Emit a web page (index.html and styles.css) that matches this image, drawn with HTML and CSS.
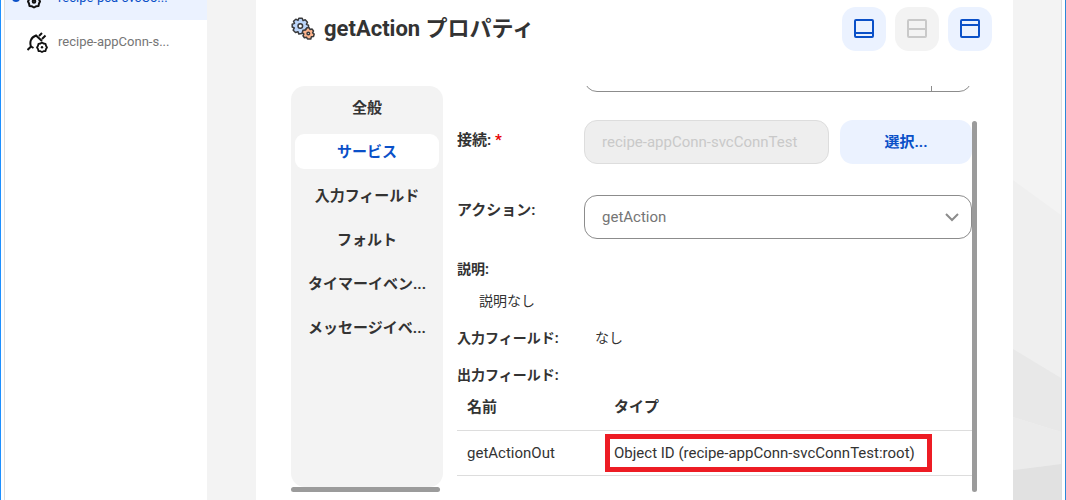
FILE: index.html
```html
<!DOCTYPE html>
<html lang="ja">

<head>
    <meta charset="UTF-8">
    <meta name="viewport" content="width=device-width, initial-scale=1.0">
    <title>getAction プロパティ</title>
    <link rel="stylesheet" href="styles.css">
</head>

<body>
    <div class="window">
        <!-- Resource list -->
        <nav class="sidebar">
            <a class="resource active" href="#">
                <span class="dot"></span>
                <svg class="resource-icon" viewBox="0 0 24 24" fill="none" stroke="#111" stroke-width="2" stroke-linejoin="round">
                    <path d="M5 11 L7 9.500 L9 11 L11.500 11 L12 13.500 L13 15.500 L12 17.500 L11.500 20 L9 20.300 L7 21.500 L5 20.300 L2.500 20 L2 17.500 L1 15.500 L2 13.500 L2.500 11 Z" />
                    <circle cx="7" cy="15.500" r="1.300" />
                </svg>
                <span class="resource-name">recipe-pca-svcCo...</span>
            </a>
            <a class="resource" href="#">
                <span class="dot"></span>
                <svg class="resource-icon" viewBox="0 0 24 24" fill="none" stroke="#111" stroke-width="2">
                    <path d="M0.500 20 L4 16.500 L6.500 18 M4 16.500 C2.500 12.500 3.500 7.500 9 5.500 L15 11 M12 6 L15 3 M15 9 L18.500 5.500" />
                    <path d="M13.500 13.500 L15 12.500 L16.500 13.500 L18.500 13.800 L19 15.800 L20 17.500 L19 19 L18.500 21 L16.500 21.200 L15 22 L13.500 21.200 L11.500 21 L11 19 L10 17.500 L11 15.800 L11.500 13.800 Z" stroke-width="1.800" stroke-linejoin="round" />
                    <circle cx="15" cy="17.300" r="1.200" fill="#111" stroke="none" />
                </svg>
                <span class="resource-name">recipe-appConn-s...</span>
            </a>
        </nav>

        <main class="workspace">
            <section class="panel">
                <header class="panel-header">
                    <svg class="gears" viewBox="0 0 24 24" stroke="#3a3a3c" stroke-width="1.500" stroke-linejoin="round">
                        <path fill="#bcd6fb" d="M7.800 1.200 H11.200 L12 3.600 L14.200 2.700 L16.500 5.200 L15.400 7.400 L17.500 8.300 V11 L15 12 L11 16.500 L7.800 17 L7 14.700 L4.500 15.500 L2.200 13.200 L3.300 11 L1.200 10 V7.200 L3.500 6.400 L2.500 4.200 L4.800 2.200 L7 3.400 Z" />
                        <circle cx="9.300" cy="9" r="2.300" fill="#fff" />
                        <path fill="#fbb38c" d="M15.800 10.800 H18.200 L19 12.500 L21 12 L22.500 14 L21.600 15.800 L23.200 17 L22.500 19.500 L20.400 19.800 L19.800 22 H16.500 L15.600 20.300 L13.400 20.800 L12 18.800 L12.900 17 L11.200 15.700 L12 13.300 L14.700 13 Z" />
                        <circle cx="17.300" cy="16.500" r="1.300" fill="#fff" />
                    </svg>
                    <h1>getAction プロパティ</h1>
                    <div class="layout-buttons">
                        <button type="button" aria-label="下部に最小化">
                            <svg viewBox="0 0 20 20"><rect x="1" y="1" width="18" height="17" rx="1" /><path d="M1 14 H19" /></svg>
                        </button>
                        <button type="button" aria-label="分割表示" disabled>
                            <svg viewBox="0 0 20 20"><rect x="1" y="1" width="18" height="17" rx="1" /><path d="M1 10 H19" /></svg>
                        </button>
                        <button type="button" aria-label="最大化">
                            <svg viewBox="0 0 20 20"><rect x="1" y="1" width="18" height="17" rx="1" /><path d="M1 6 H19" /></svg>
                        </button>
                    </div>
                </header>

                <div class="panel-body">
                    <!-- Tabs -->
                    <div class="tabs-column">
                        <div class="tabs" role="tablist">
                            <button type="button" role="tab">全般</button>
                            <button type="button" role="tab" class="selected" aria-selected="true">サービス</button>
                            <button type="button" role="tab">入力フィールド</button>
                            <button type="button" role="tab">フォルト</button>
                            <button type="button" role="tab">タイマーイベン...</button>
                            <button type="button" role="tab">メッセージイベ...</button>
                        </div>
                        <div class="scroll-x"></div>
                    </div>

                    <!-- Service settings -->
                    <div class="form-pane">
                        <form class="service-form">
                            <div class="field field-first">
                                <div class="control">
                                    <select aria-label="サービス"></select>
                                    <span class="divider"></span>
                                </div>
                            </div>
                            <div class="field">
                                <label for="connection">接続: <span class="required">*</span></label>
                                <div class="control">
                                    <input type="text" id="connection" value="recipe-appConn-svcConnTest" disabled>
                                    <button type="button" class="choose">選択...</button>
                                </div>
                            </div>
                            <div class="field field-action">
                                <label for="action">アクション:</label>
                                <div class="control">
                                    <select id="action">
                                        <option>getAction</option>
                                    </select>
                                    <svg class="chevron" viewBox="0 0 16 16"><path d="M2 5 L8 11 L14 5" /></svg>
                                </div>
                            </div>
                        </form>

                        <dl class="details">
                            <div class="stacked">
                                <dt>説明:</dt>
                                <dd>説明なし</dd>
                            </div>
                            <div class="inline">
                                <dt>入力フィールド:</dt>
                                <dd>なし</dd>
                            </div>
                        </dl>

                        <table class="outputs">
                            <caption>出力フィールド:</caption>
                            <thead>
                                <tr>
                                    <th class="name">名前</th>
                                    <th>タイプ</th>
                                </tr>
                            </thead>
                            <tbody>
                                <tr>
                                    <td>getActionOut</td>
                                    <td><span class="marked">Object ID (recipe-appConn-svcConnTest:root)</span></td>
                                </tr>
                            </tbody>
                        </table>
                    </div>
                    <div class="scroll-y"></div>
                </div>
            </section>

            <!-- Backdrop facets -->
            <svg class="backdrop" viewBox="0 0 48 500" preserveAspectRatio="none">
                <path fill="#efefef" d="M0 180 L48 215 V500 H0 Z" />
                <path fill="#e8e8e8" d="M0 349 L48 378 V432 L0 417 Z" />
                <path fill="#ebebeb" d="M0 417 L48 432 V464 L0 470 Z" />
                <path fill="#e1e1e1" d="M0 470 L48 464 V500 H0 Z" />
            </svg>
        </main>
    </div>
</body>

</html>
```

FILE: styles.css
```css
* {
    margin: 0;
    padding: 0;
    box-sizing: border-box;
}

body {
    font-family: Roboto, "Noto Sans CJK JP", sans-serif;
    font-size: 15px;
    line-height: 20px;
    color: #333;
    background-color: #fff;
}

button,
input,
select {
    font: inherit;
}

.window {
    display: flex;
    height: 100vh;
    padding: 0 3px;
    border-left: 1px solid #1e90ff;
    border-right: 1px solid #2b88d8;
    overflow: hidden;
}

/* Resource list */
.sidebar {
    width: 203px;
    flex-shrink: 0;
    margin-top: -24px; /* scrolled by half a row */
    border-left: 1px solid #ddd;
}

.resource {
    display: flex;
    align-items: center;
    height: 44px;
    padding-left: 7px;
    font-size: 13px;
    color: #757575;
    text-decoration: none;
}

.resource.active {
    background-color: #ebf2ff;
    color: #0a50c8;
}

.dot {
    width: 8px;
    height: 8px;
    margin-right: 7px;
    border-radius: 50%;
}

.active .dot {
    background-color: #0a50c8;
}

.resource-icon {
    width: 24px;
    height: 24px;
    margin-right: 7px;
}

/* Workspace */
.workspace {
    display: flex;
    flex: 1;
    min-width: 0;
    padding-left: 49px;
    background-color: #f3f3f3;
    border-right: 1px solid #ddd;
}

.backdrop {
    width: 48px;
    height: 100%;
    flex-shrink: 0;
}

.panel {
    display: flex;
    flex: 1;
    flex-direction: column;
    min-width: 0;
    padding: 7px 21px 8px 35px;
    background-color: #fff;
}

.panel-header {
    display: flex;
    align-items: center;
    height: 44px;
    margin-bottom: 35px;
}

.gears {
    width: 24px;
    height: 24px;
    margin-right: 9px;
}

h1 {
    font-size: 22px;
    line-height: 28px;
    font-weight: 700;
}

.layout-buttons {
    display: flex;
    gap: 9px;
    margin-left: auto;
}

.layout-buttons button {
    display: flex;
    align-items: center;
    justify-content: center;
    width: 44px;
    height: 44px;
    border: none;
    border-radius: 14px;
    background-color: #ebf2ff;
    color: #0a50c8;
}

.layout-buttons button:disabled {
    background-color: #f3f3f3;
    color: #c9c9c9;
}

.layout-buttons svg {
    width: 20px;
    height: 20px;
    fill: none;
    stroke: currentColor;
    stroke-width: 2;
}

.panel-body {
    display: flex;
    flex: 1;
    min-height: 0;
    margin-right: 15px;
}

/* Tabs */
.tabs-column {
    display: flex;
    flex-direction: column;
    width: 152px;
    flex-shrink: 0;
    margin-right: 14px;
}

.tabs {
    display: flex;
    flex: 1;
    flex-direction: column;
    gap: 9px;
    padding: 4px;
    border-radius: 14px;
    background-color: #f3f3f3;
}

.tabs button {
    height: 35px;
    padding: 0 8px;
    border: none;
    border-radius: 9px;
    background: none;
    color: #333;
    font-weight: 700;
    white-space: nowrap;
}

.tabs .selected {
    background-color: #fff;
    color: #0a50c8;
}

.scroll-x {
    height: 5px;
    margin-right: 3px;
    border-radius: 3px;
    background-color: #9b9b9b;
}

/* Service settings */
.form-pane {
    flex: 1;
    min-width: 0;
    overflow: hidden;
}

.scroll-y {
    width: 5px;
    margin-top: 35px;
    border-radius: 3px;
    background-color: #9b9b9b;
}

.service-form {
    margin-top: -38px; /* scrolled past the first field */
}

.field {
    display: flex;
    margin-bottom: 28px;
}

.field label {
    width: 127px;
    padding-top: 10px;
    font-weight: 700;
}

.field-first {
    padding-left: 127px;
}

.required {
    color: #e60000;
}

.control {
    display: flex;
    flex: 1;
    gap: 11px;
    min-width: 0;
    position: relative;
}

.control input,
.control select {
    flex: 1;
    min-width: 0;
    height: 44px;
    padding: 0 17px;
    border: 1px solid #8c8c8c;
    border-radius: 13px;
    background-color: #fff;
    color: #757575;
    appearance: none;
}

.control input:disabled {
    border-color: #ddd;
    background-color: #eee;
    color: #c9c9c9;
}

.divider {
    position: absolute;
    top: 0;
    right: 40px;
    width: 1px;
    height: 44px;
    background-color: #8c8c8c;
}

.choose {
    width: 132px;
    height: 44px;
    border: none;
    border-radius: 13px;
    background-color: #ebf2ff;
    color: #0a50c8;
    font-weight: 700;
}

.field-action {
    margin-bottom: 20px;
}

.field-action label {
    padding-top: 8px;
}

.field-action .control {
    padding-top: 3px;
}

.chevron {
    position: absolute;
    top: 17px;
    right: 12px;
    width: 16px;
    height: 16px;
    fill: none;
    stroke: #8c8c8c;
    stroke-width: 2;
    pointer-events: none;
}

.details,
.outputs caption {
    font-size: 14px;
}

.details dt {
    font-weight: 700;
}

.stacked dd {
    margin: 12px 0 0 22px;
}

.inline {
    display: flex;
    margin-top: 17px;
}

.inline dt {
    width: 138px;
}

/* Output fields */
.outputs {
    width: 100%;
    margin-top: 17px;
    border-collapse: collapse;
    table-layout: fixed;
    text-align: left;
}

.outputs caption {
    font-weight: 700;
    text-align: left;
}

.outputs th,
.outputs td {
    height: 45px;
    padding: 0 10px;
    border-bottom: 1px solid #ddd;
    white-space: nowrap;
}

.outputs .name {
    width: 147px;
}

.marked {
    position: relative;
}

.marked::after {
    content: "";
    position: absolute;
    inset: -10px -17px -10px -9px;
    border: 5px solid #ed1c24;
}
```
